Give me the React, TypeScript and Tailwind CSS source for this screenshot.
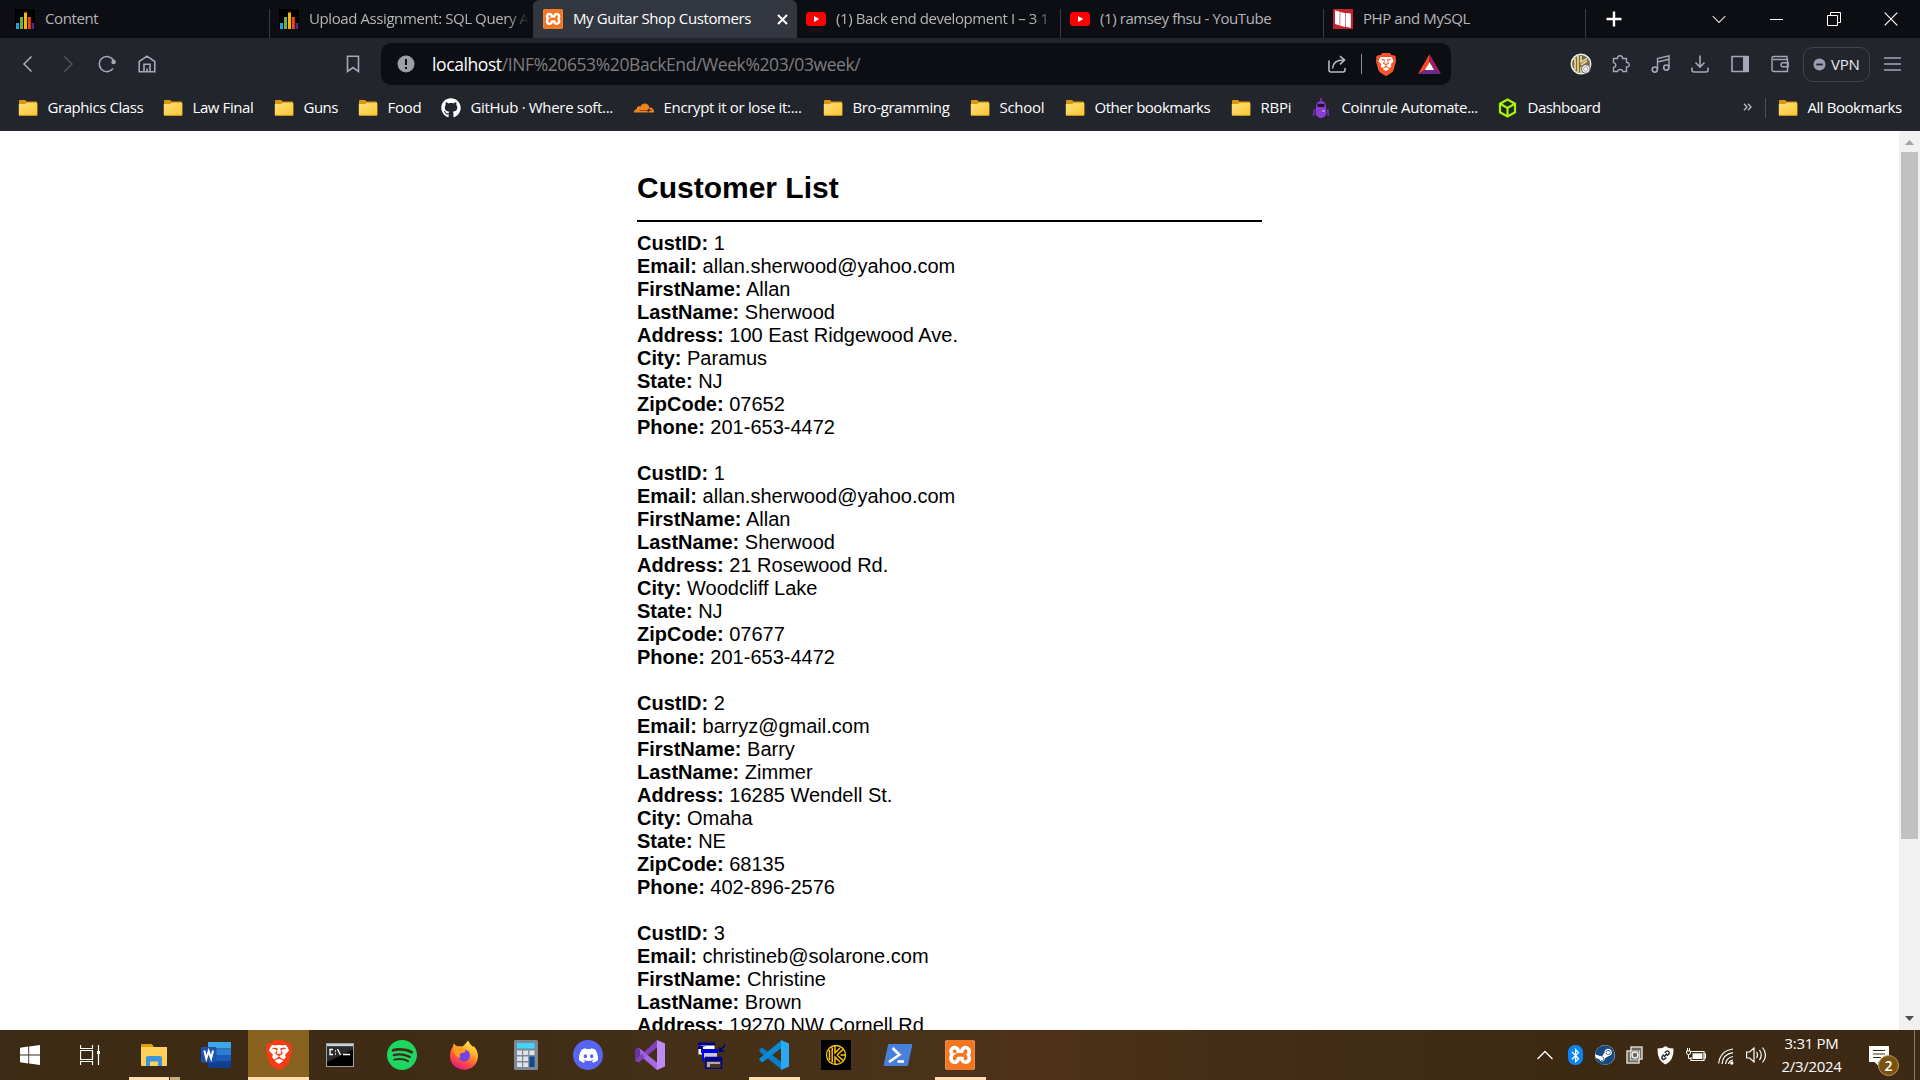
import React from "react";
import { SiBrave, SiXampp, SiCloudflare, SiSpotify, SiDiscord } from "react-icons/si";
import { FaGithub, FaSteam, FaBluetoothB } from "react-icons/fa";

/* ---------- shared icons ---------- */

const Folder = () => (
  <svg width="20" height="18" viewBox="0 0 20 18" className="shrink-0">
    <defs>
      <linearGradient id="fold" x1="0" y1="0" x2="1" y2="1">
        <stop offset="0" stopColor="#ffe07d" />
        <stop offset="1" stopColor="#fbc52f" />
      </linearGradient>
    </defs>
    <path d="M1 2.2Q1 1 2 1h5l1.6 1.6H18q1 0 1 1V8H1z" fill="#d9970c" />
    <path d="M.8 5h6.4l1.6-1.3h9.6q1 0 1 1v11q0 1-1 1H1.8q-1 0-1-1z" fill="url(#fold)" />
    <path d="M1 16.4h18" stroke="#c58f16" strokeWidth=".8" />
  </svg>
);

const Bars = () => (
  <svg width="20" height="20" viewBox="0 0 20 20" className="shrink-0">
    <rect width="20" height="20" fill="#000" />
    <rect x="1" y="14" width="3" height="6" fill="#1ba1f0" />
    <rect x="5" y="8" width="3" height="12" fill="#6cb52d" />
    <rect x="9" y="3.5" width="3" height="16.5" fill="#f5b50a" />
    <rect x="12.8" y="8" width="3" height="12" fill="#f0491d" />
    <rect x="16.6" y="14" width="2.6" height="6" fill="#5b2291" />
  </svg>
);

const YouTube = () => (
  <svg width="20" height="20" viewBox="0 0 20 20" className="shrink-0">
    <rect y="3" width="20" height="14" rx="3.5" fill="#f00" />
    <path d="M8 7l5.2 3L8 13z" fill="#fff" />
  </svg>
);

const Murach = () => (
  <svg width="20" height="20" viewBox="0 0 20 20" className="shrink-0">
    <rect width="20" height="20" fill="#c4222c" />
    <path d="M2 1.5l4.6 1v14L2 15zM7.2 3l4.800 1v14l-4.800-1.300zM12.600 4l5.200.6V19L12.600 17.600z" fill="#fff" />
  </svg>
);

const Xampp = ({ size }: { size: number }) => (
  <span className="flex shrink-0 rounded-[3px] bg-white">
    <SiXampp size={size} color="#f37623" />
  </span>
);

const BraveLion = ({ w, h, color }: { w: number; h: number; color: string }) => (
  <svg width={w} height={h} viewBox="2 0 20 24" preserveAspectRatio="none" className="shrink-0">
    <path d="M6 4h12l2 5-3 8-5 4-5-4-3-8z" fill="#fff" />
    <SiBrave size={24} color={color} />
  </svg>
);

/* ---------- tab strip ---------- */

const tabs = [
  { title: "Content", icon: <Bars />, cls: "w-[270px] pl-[15px]", sep: true },
  { title: "Upload Assignment: SQL Query A", icon: <Bars />, cls: "w-[263px] pl-[9px]", fade: true },
  { title: "My Guitar Shop Customers", icon: <Xampp size={20} />, cls: "w-[264px] pl-[10px]", active: true },
  { title: "(1) Back end development I – 3 1", icon: <YouTube />, cls: "w-[264px] pl-[9px]", sep: true, fade: true },
  { title: "(1) ramsey fhsu - YouTube", icon: <YouTube />, cls: "w-[263px] pl-[9px]", sep: true },
  { title: "PHP and MySQL", icon: <Murach />, cls: "w-[262px] pl-[9px]", sep: true },
];

const TabStrip = () => (
  <div className="flex h-[38px] shrink-0 bg-[#0d0e13]">
    {tabs.map((t) => (
      <div
        key={t.title}
        className={`flex h-[38px] shrink-0 items-center overflow-hidden ${t.cls} ${
          t.active ? "rounded-t-[6px] bg-[#32363f] text-white" : "text-[#b4b5b8]"
        }`}
      >
        {t.icon}
        <span
          className={`ml-[10px] flex-1 whitespace-nowrap pb-[2px] text-[15px] leading-5 tracking-[-0.41px] ${
            t.fade ? "mr-1 [mask-image:linear-gradient(to_right,#000_90%,transparent)]" : ""
          }`}
        >
          {t.title}
        </span>
        {t.active && (
          <svg width="11" height="11" viewBox="0 0 11 11" className="mr-[9px]">
            <path d="M1 1l9 9M10 1l-9 9" stroke="#fff" strokeWidth="2" />
          </svg>
        )}
        {t.sep && <span className="mt-[9px] h-[29px] w-px self-start bg-[#3a3b40]" />}
      </div>
    ))}
    <div className="flex flex-1 items-center">
      <svg width="16" height="16" viewBox="0 0 16 16" className="ml-[20px]">
        <path d="M8 .5v15M.5 8h15" stroke="#fff" strokeWidth="2.4" />
      </svg>
      <svg width="14" height="9" viewBox="0 0 14 9" className="ml-[90px]">
        <path d="M.7 1.2L7 7.5l6.3-6.3" stroke="#ddd" strokeWidth="1.1" fill="none" />
      </svg>
      <span className="ml-[44px] h-px w-[13px] bg-white" />
      <svg width="14" height="14" viewBox="0 0 14 14" className="ml-[44px]">
        <path d="M.5 3.5h10v10H.5zM3.5 3.5v-3h10v10h-3" stroke="#fff" fill="none" />
      </svg>
      <svg width="14" height="14" viewBox="0 0 14 14" className="ml-[43px]">
        <path d="M.7.7l12.6 12.6M13.3.7L.7 13.3" stroke="#fff" strokeWidth="1.2" />
      </svg>
    </div>
  </div>
);

/* ---------- toolbar ---------- */

const Cell = ({ cls, children }: { cls: string; children: React.ReactNode }) => (
  <div className={`flex shrink-0 items-center justify-center ${cls}`}>{children}</div>
);

const stroke = { stroke: "#a3a8b6", strokeWidth: 1.6, fill: "none" } as const;

const Toolbar = () => (
  <div className="flex h-[52px] shrink-0 items-center bg-[#22252c]">
    <Cell cls="ml-2 w-10">
      <svg width="18" height="18" viewBox="0 0 18 18">
        <path d="M12.5 1.500L5 9l7.500 7.500" {...stroke} />
      </svg>
    </Cell>
    <Cell cls="w-[39px]">
      <svg width="18" height="18" viewBox="0 0 18 18">
        <path d="M5.500 1.500L13 9l-7.500 7.500" stroke="#50545e" strokeWidth="1.6" fill="none" />
      </svg>
    </Cell>
    <Cell cls="w-10">
      <svg width="18" height="18" viewBox="0 0 18 18">
        <path d="M15.600 5.500A7.600 7.600 0 1 0 15 13.600" {...stroke} />
        <circle cx="15.600" cy="7" r="2.300" fill="#a3a8b6" />
      </svg>
    </Cell>
    <Cell cls="w-10">
      <svg width="18" height="18" viewBox="0 0 18 18">
        <path d="M1.200 6.500L9 1.200l7.800 5.300v10.200H1.200zM6 16.500V9.200h6v7.300M9 16.500v-3" {...stroke} />
      </svg>
    </Cell>
    <Cell cls="ml-[166px] w-10">
      <svg width="14" height="18" viewBox="0 0 14 18">
        <path d="M1.500 1.200h11v15.300L7 12.600l-5.500 3.900z" {...stroke} />
      </svg>
    </Cell>
    <div className="ml-[8px] flex h-[42px] w-[1070px] shrink-0 items-center rounded-[10px] bg-[#0d0e13] pl-[16px]">
      <svg width="18" height="18" viewBox="0 0 18 18">
        <circle cx="9" cy="9" r="8.500" fill="#9aa0a6" />
        <path d="M9 4v6M9 12v2" stroke="#0d0e13" strokeWidth="2" />
      </svg>
      <span className="ml-[17px] flex-1 whitespace-nowrap text-[17.5px] leading-6 tracking-[-0.4px] text-[#7c7d80]">
        <span className="text-white">localhost</span>/INF%20653%20BackEnd/Week%203/03week/
      </span>
      <svg width="18" height="18" viewBox="0 0 18 18">
        <path d="M1 5.500v9.500q0 2 2 2h12q2 0 2-2v-2M4.500 13.500q.5-8.500 11-8.500M12 1.200l4.500 3.800L12 9.300" {...stroke} stroke="#b6bac4" />
      </svg>
      <span className="ml-[15px] h-5 w-px bg-[#8b8d93]" />
      <span className="ml-[14px]">
        <BraveLion w={20} h={23} color="#fb542b" />
      </span>
      <svg width="23" height="20" viewBox="0 0 23 20" className="ml-[22px] mr-[10px]">
        <path d="M11.500 0L0 20l7-4 4.500-8z" fill="#ff4724" />
        <path d="M11.500 0L23 20l-7-4-4.500-8z" fill="#9e1f63" />
        <path d="M0 20h23l-7-4.200H7z" fill="#662d91" />
        <path d="M11.500 8l4.600 8H6.900z" fill="#fff" />
      </svg>
    </div>
    <Cell cls="ml-[110px] w-10">
      <svg width="22" height="22" viewBox="0 0 22 22">
        <circle cx="11" cy="11" r="9.700" fill="#756b4c" stroke="#eee" strokeWidth="1.500" />
        <path d="M5 5v12M8 3v16M11 3v6l6-3.500M11 12l6-4M11 20v-5l3-2" stroke="#e8d28b" strokeWidth="1.800" fill="none" />
        <circle cx="15.800" cy="16" r="4.200" fill="#fff" stroke="#666" />
        <circle cx="15.800" cy="16" r="2.200" fill="none" stroke="#999" />
      </svg>
    </Cell>
    <Cell cls="w-[39px]">
      <svg width="18" height="18" viewBox="0 0 18 18">
        <path d="M1.500 3.500h4q-.3-2.700 2.500-2.700t2.500 2.700h4v4q2.700-.2 2.700 2.200t-2.700 2.200v4.600h-3.700q-.3-2-2.600-2t-2.600 2H1.500v-4q2.300-.3 2.300-2.400T1.500 7.600z" {...stroke} strokeWidth={1.400} />
      </svg>
    </Cell>
    <Cell cls="w-10">
      <svg width="19" height="18" viewBox="0 0 19 18">
        <path d="M6.500 14.500V3.500L18 .8v11.500M6.500 7L18 4.300" {...stroke} strokeWidth={1.400} />
        <circle cx="3.800" cy="14.600" r="2.600" {...stroke} />
        <circle cx="15.300" cy="12.600" r="2.600" {...stroke} />
      </svg>
    </Cell>
    <Cell cls="w-10">
      <svg width="18" height="18" viewBox="0 0 18 18">
        <path d="M9 .5v11M4.500 7.500L9 12l4.500-4.500M1 12.500v2.500q0 2 2 2h12q2 0 2-2v-2.500" {...stroke} />
      </svg>
    </Cell>
    <Cell cls="w-10">
      <svg width="18" height="18" viewBox="0 0 18 18">
        <path d="M1 1.500h16v15H1z" {...stroke} />
        <path d="M12 1h6v16h-6z" fill="#a3a8b6" />
      </svg>
    </Cell>
    <Cell cls="w-10">
      <svg width="18" height="18" viewBox="0 0 18 18">
        <path d="M16 5V1.500H3Q1 1.500 1 3v11.500q0 2 2 2h13.500V4.500H2M17.200 7.800H12q-2 0-2 2t2 2h5.200z" {...stroke} strokeWidth={1.400} />
      </svg>
    </Cell>
    <div className="ml-[3px] flex h-[35px] w-[67px] shrink-0 items-center rounded-[10px] border border-[#3f444f] pl-[9px]">
      <svg width="13" height="13" viewBox="0 0 13 13">
        <circle cx="6.500" cy="6.500" r="6" fill="#9a9fb0" />
        <path d="M3.200 6.500h6.600" stroke="#22252c" strokeWidth="1.800" />
      </svg>
      <span className="ml-[5px] text-[15px] leading-5 tracking-[-0.2px] text-[#e8e9ec]">VPN</span>
    </div>
    <svg width="17" height="14" viewBox="0 0 17 14" className="ml-[14px]">
      <path d="M0 1h17M0 7h17M0 13h17" {...stroke} strokeWidth={1.500} />
    </svg>
  </div>
);

/* ---------- bookmarks ---------- */

const Bot = () => (
  <svg width="18" height="20" viewBox="0 0 18 20" className="mr-[2px] shrink-0">
    <path d="M9 0v4" stroke="#7b35c2" strokeWidth="1.500" />
    <path d="M4 9q0-6 5-6t5 6l.5 7q-2 4-5.500 4t-5.500-4z" fill="#8b3dd0" />
    <path d="M5.500 5.800h7v3.200h-7z" fill="#1d1230" />
    <path d="M2.500 11L1.500 18M15.500 11l1 7" stroke="#6a2bab" strokeWidth="2" />
    <path d="M10.500 13h2" stroke="#fff" />
  </svg>
);

const Cube = () => (
  <svg width="19" height="20" viewBox="0 0 19 20" className="mr-px shrink-0">
    <path d="M9.500 1.500l7.500 4.200v8.600l-7.500 4.200L2 14.300V5.700zM2.500 6l7 4 7-4M9.500 10v8" stroke="#a6f20a" strokeWidth="2.200" fill="none" />
  </svg>
);

const bookmarks = [
  { t: "Graphics Class", w: "w-[145px] tracking-[-0.43px]" },
  { t: "Law Final", w: "w-[111px] tracking-[-0.4px]" },
  { t: "Guns", w: "w-[84px] tracking-[-0.5px]" },
  { t: "Food", w: "w-[83px] tracking-[-0.3px]" },
  { t: "GitHub · Where soft...", w: "w-[193px] tracking-[-0.32px]", i: <FaGithub size={20} color="#fff" className="shrink-0" /> },
  { t: "Encrypt it or lose it:...", w: "w-[189px] tracking-[-0.32px]", i: <SiCloudflare size={20} color="#f6821f" className="shrink-0" /> },
  { t: "Bro-gramming", w: "w-[147px] tracking-[-0.35px]" },
  { t: "School", w: "w-[95px] tracking-[-0.3px]" },
  { t: "Other bookmarks", w: "w-[166px] tracking-[-0.5px]" },
  { t: "RBPi", w: "w-[81px] tracking-[-0.2px]" },
  { t: "Coinrule Automate...", w: "w-[186px] tracking-[-0.37px]", i: <Bot /> },
  { t: "Dashboard", w: "w-[241px] tracking-[-0.5px]", i: <Cube /> },
];

const Bookmarks = () => (
  <div className="flex h-[41px] shrink-0 items-center bg-[#22252c] pb-[5px] pl-[18px] text-[15px] leading-5 text-white">
    {bookmarks.map((b) => (
      <div key={b.t} className={`flex shrink-0 items-center gap-[9.500px] whitespace-nowrap ${b.w}`}>
        {b.i ?? <Folder />}
        <span className="pb-[2px]">{b.t}</span>
      </div>
    ))}
    <svg width="9" height="8" viewBox="0 0 9 8" className="ml-[4px] mb-[2px]">
      <path d="M1 .7L4 4 1 7.300M5 .7L8 4 5 7.300" stroke="#b7bbc6" strokeWidth="1.300" fill="none" />
    </svg>
    <span className="ml-[13px] h-5 w-px bg-[#4b4f59]" />
    <div className="ml-[12px] flex items-center gap-[9.500px] whitespace-nowrap tracking-[-0.45px]">
      <Folder />
      <span className="pb-[2px]">All Bookmarks</span>
    </div>
  </div>
);

/* ---------- page ---------- */

const customers = [
  ["1", "allan.sherwood@yahoo.com", "Allan", "Sherwood", "100 East Ridgewood Ave.", "Paramus", "NJ", "07652", "201-653-4472"],
  ["1", "allan.sherwood@yahoo.com", "Allan", "Sherwood", "21 Rosewood Rd.", "Woodcliff Lake", "NJ", "07677", "201-653-4472"],
  ["2", "barryz@gmail.com", "Barry", "Zimmer", "16285 Wendell St.", "Omaha", "NE", "68135", "402-896-2576"],
  ["3", "christineb@solarone.com", "Christine", "Brown", "19270 NW Cornell Rd"],
];
const fields = ["CustID", "Email", "FirstName", "LastName", "Address", "City", "State", "ZipCode", "Phone"];

const Page = () => (
  <div className="flex min-h-0 flex-1 overflow-hidden bg-white">
    <div className="flex-1 overflow-hidden pl-[637px] font-['Liberation_Sans',Arial,sans-serif] text-black">
      <div className="w-[625px]">
        <h2 className="pt-[40px] text-[30px] font-bold leading-[34px]">Customer List</h2>
        <div className="mt-[15px] h-[2px] bg-black" />
        <div className="mt-[10px] flex flex-col gap-[23px] text-[20px] leading-[23px]">
          {customers.map((c, i) => (
            <div key={i}>
              {c.map((v, j) => (
                <p key={j} className="whitespace-nowrap">
                  <b>{fields[j]}:</b> {v}
                </p>
              ))}
            </div>
          ))}
        </div>
      </div>
    </div>
    <div className="flex w-[21px] shrink-0 flex-col items-center bg-[#f1f1f1]">
      <svg width="9" height="5" viewBox="0 0 9 5" className="mt-[9px]">
        <path d="M4.500 0L9 5H0z" fill="#a3a3a3" />
      </svg>
      <div className="mt-[7px] h-[687px] w-[17px] bg-[#c1c1c1]" />
      <svg width="9" height="5" viewBox="0 0 9 5" className="mb-[9px] mt-auto">
        <path d="M0 0h9L4.500 5z" fill="#505050" />
      </svg>
    </div>
  </div>
);

/* ---------- taskbar ---------- */

const Explorer = () => (
  <svg width="28" height="24" viewBox="0 0 28 24">
    <path d="M1 1.500Q1 1 2 1h10l1.500 2.500V8H1z" fill="#e0a00c" />
    <path d="M1 4h26v18q0 1-1 1H2q-1 0-1-1z" fill="#fdd05a" />
    <path d="M6 15q0-2 2-2h12q2 0 2 2v8h-4v-4.500h-8V23H6z" fill="#3a95dc" />
  </svg>
);

const Word = () => (
  <svg width="30" height="26" viewBox="0 0 30 26">
    <path d="M7 0h23v6.500H7z" fill="#41a5ee" />
    <path d="M7 6.500h23V13H7z" fill="#2b7cd3" />
    <path d="M7 13h23v6.500H7z" fill="#185abd" />
    <path d="M7 19.500h23V26H7z" fill="#103f91" />
    <rect y="5" width="15.500" height="15.500" rx="1" fill="#1a53ad" />
    <path d="M3.300 8.500l2 8 2.400-7.500 2.400 7.500 2-8" stroke="#fff" strokeWidth="2" fill="none" />
  </svg>
);

const Cmd = () => (
  <svg width="28" height="24" viewBox="0 0 28 24">
    <rect x=".5" y=".5" width="27" height="23" fill="#000" stroke="#9aa0a6" />
    <path d="M1 1h26v2.500H1z" fill="#c9d1da" />
    <path d="M1 3.500h26v3L1 19z" fill="#2c2c2c" />
    <path d="M7 6.500H4v5h3M9 8h1M9 11h1M11.500 6l3 6M17 11.500h7" stroke="#fff" strokeWidth="1.300" fill="none" />
  </svg>
);

const Firefox = () => (
  <svg width="30" height="30" viewBox="0 0 30 30">
    <defs>
      <linearGradient id="ff" x1=".8" y1="0" x2=".3" y2="1">
        <stop offset="0" stopColor="#fff44f" />
        <stop offset=".35" stopColor="#ffb02a" />
        <stop offset=".65" stopColor="#ff5a36" />
        <stop offset="1" stopColor="#e31587" />
      </linearGradient>
    </defs>
    <path d="M19 .5q2 4 4.500 6 1 .8 1.300-.5Q29 11 29 16.500A14 13.500 0 0 1 1 16q0-5.500 3-9.500l.5-3L7.500 6l6 .5Q16 5 19 .5z" fill="url(#ff)" />
    <circle cx="15" cy="15.500" r="6" fill="#7542e5" />
    <path d="M4 8q5-3 9 0 3 1.500 4 3-2 2.500-5 2-2 2-1 5-6-1-7-10z" fill="#ff9b24" />
  </svg>
);

const Calculator = () => (
  <svg width="24" height="30" viewBox="0 0 24 30">
    <rect width="24" height="30" rx="1.500" fill="#7d8894" />
    <path d="M3 3h17.500v5.500H3z" fill="#40d6f7" />
    <path d="M3 10.500h5V15H3zM9.200 10.500h5V15h-5zM15.500 10.500h5V15h-5zM3 16.500h5V21H3zM9.200 16.500h5V21h-5zM3 22.500h5V27H3zM9.200 22.500h5V27h-5z" fill="#dde3e8" />
    <path d="M15.500 16.500h5V27h-5z" fill="#104a8c" />
  </svg>
);

const VisualStudio = () => (
  <svg width="30" height="30" viewBox="0 0 30 30">
    <path d="M0 9.500l3.500-2L22 23v7L0 12z" fill="#9a5bd6" />
    <path d="M0 9.500L3.500 7.500 5 9v12L3.500 22.500 0 20.500z" fill="#68359f" />
    <path d="M3.500 22.500L0 20.500 22 0v7.500z" fill="#8341c0" />
    <path d="M4.500 8.400L22 22.500V30L10 18 3.500 8z" fill="#ad70e8" opacity=".7" />
    <path d="M22 0l8 3.500v23L22 30z" fill="#c08af5" />
  </svg>
);

const Windows9x = () => (
  <svg width="28" height="28" viewBox="0 0 28 28">
    <path d="M.5 2.500h16v11H.5z" fill="#fff" />
    <path d="M0 1.500h17v3H0zM0 4v4h3v4h2v-6h3" fill="#00008b" />
    <path d="M4 8h16v4H4z" fill="#0000ee" />
    <path d="M5 12h14v5H5z" fill="#c9c9d9" />
    <path d="M4 12h2v8H4z" fill="#00f" />
    <path d="M7.500 16.500h16v11h-16z" fill="#4a3319" stroke="#00008b" strokeWidth="1.500" />
    <path d="M8 17h15v3H8z" fill="#00009b" />
    <path d="M9 21h13v2H12v3H9z" fill="#aab" />
    <path d="M26 1q3 5-2 7l3 3h-6V6l2 1q4-2 3-6z" fill="#00007b" />
  </svg>
);

const VsCode = () => (
  <svg width="30" height="30" viewBox="0 0 30 30">
    <path d="M0 9.800L3.300 7.500 23 22.500V30L1 12z" fill="#0a7bc4" />
    <path d="M0 19.800L3.300 22.500 23 7.500V0L1 18z" fill="#0a8bd8" />
    <path d="M22 0l8 3.500v23L22 30z" fill="#2aa9f2" />
  </svg>
);

const Keeper = () => (
  <svg width="30" height="30" viewBox="0 0 30 30">
    <rect width="30" height="30" fill="#000" />
    <circle cx="15" cy="15" r="9.500" fill="none" stroke="#fcc40f" strokeWidth="1.300" />
    <path d="M8.500 10v10M11.200 7.500v15M14 6v7l5-5M14 24v-7l5 5M16 15l6-5.500M16 15l6 5.500M19.500 15H24" stroke="#fcc40f" strokeWidth="1.500" fill="none" />
  </svg>
);

const PowerShell = () => (
  <svg width="30" height="24" viewBox="0 0 30 24">
    <path d="M6 1h22.500q1 0 .8 1L25 22q-.3 1-1.300 1H1.500q-1 0-.8-1L5 2q.2-1 1-1z" fill="#4781db" />
    <path d="M9.500 5l7 6.700L6 19M14.500 18.500h6.500" stroke="#fff" strokeWidth="2.600" fill="none" />
  </svg>
);

const apps = [
  { id: "explorer", icon: <Explorer />, split: true },
  { id: "word", icon: <Word /> },
  { id: "brave", icon: <BraveLion w={26} h={30} color="#fa3a12" />, active: true },
  { id: "cmd", icon: <Cmd /> },
  { id: "spotify", icon: <SiSpotify size={30} color="#1ed760" /> },
  { id: "firefox", icon: <Firefox /> },
  { id: "calculator", icon: <Calculator /> },
  {
    id: "discord",
    icon: (
      <span className="flex size-[30px] items-center justify-center rounded-full bg-[#5865f2]">
        <SiDiscord size={19} color="#fff" />
      </span>
    ),
  },
  { id: "vs", icon: <VisualStudio /> },
  { id: "win9x", icon: <Windows9x /> },
  { id: "vscode", icon: <VsCode />, open: true },
  { id: "keeper", icon: <Keeper /> },
  { id: "ps", icon: <PowerShell /> },
  { id: "xampp", icon: <Xampp size={30} />, open: true },
];

const w = { stroke: "#fff", fill: "none" } as const;

const Taskbar = () => (
  <div className="flex h-[50px] shrink-0 bg-[linear-gradient(90deg,#3d2a14_0%,#402c15_25%,#4a331a_50%,#4f311a_53%,#432d16_65%,#3c2913_85%,#3e2a14_100%)] text-white">
    <Cell cls="w-[60px]">
      <svg width="20" height="20" viewBox="0 0 20 20" fill="#fff">
        <path d="M0 2.800l8.300-1.200v7.900H0zM9.200 1.500L20 0v9.500H9.200zM0 10.500h8.300v7.900L0 17.200zM9.200 10.500H20V20L9.200 18.500z" />
      </svg>
    </Cell>
    <Cell cls="mr-[3px] w-[60px]">
      <svg width="20" height="20" viewBox="0 0 20 20">
        <path d="M.5 0v3.500h12V0M.5 20v-3.500h12V20M.5 5.500h12v9H.5zM18.500 0v20" {...w} strokeWidth="1.200" />
        <path d="M17 6h3v3h-3z" fill="#fff" />
      </svg>
    </Cell>
    {apps.map((a) => (
      <div
        key={a.id}
        className={`flex shrink-0 flex-col items-center ${a.active ? "ml-px w-[61px] bg-[#87611d]" : "w-[62px]"}`}
      >
        <div className="flex h-[47px] items-center pt-[3px]">{a.icon}</div>
        {a.active && <div className="h-[3px] w-full bg-[#ffdfb0]" />}
        {a.open && <div className="h-[3px] w-[51px] bg-[#ffdfb0]" />}
        {a.split && (
          <div className="flex h-[3px] w-[51px] gap-px">
            <span className="w-10 bg-[#ffdfb0]" />
            <span className="w-[10px] bg-[#c9ab82]" />
          </div>
        )}
      </div>
    ))}
    <div className="ml-auto flex items-center">
      <Cell cls="w-[30px]">
        <svg width="16" height="10" viewBox="0 0 16 10">
          <path d="M.5 9L8 1.500 15.500 9" {...w} strokeWidth="1.300" />
        </svg>
      </Cell>
      <Cell cls="w-[30px]">
        <span className="flex h-5 w-[15px] items-center justify-center rounded-[7px] bg-[#0a84f5]">
          <FaBluetoothB size={15} />
        </span>
      </Cell>
      <Cell cls="w-[30px]">
        <span className="flex rounded-full bg-white">
          <FaSteam size={20} color="#174a80" />
        </span>
      </Cell>
      <Cell cls="w-[30px]">
        <svg width="18" height="18" viewBox="0 0 18 18">
          <path d="M5 1h11v12h-3v4H1V5h4z" fill="#6b665e" stroke="#d8d5cf" strokeWidth="1.500" />
          <path d="M4.500 5h9v9h-9z" fill="none" stroke="#d8d5cf" strokeWidth="1.200" />
          <circle cx="9" cy="9" r="3" fill="none" stroke="#eee" strokeWidth="1.500" />
        </svg>
      </Cell>
      <Cell cls="w-[30px]">
        <svg width="17" height="19" viewBox="0 0 17 19">
          <path d="M8.500 0Q11 2.500 16.500 2.500q.5 12-8 16-8.500-4-8-16Q6 2.500 8.500 0z" fill="#fff" />
          <path d="M7.800 6.800l1.500-1.500q1.500-1 2.500.3t0 2.500L10 9.800M9.300 11.500l-1.500 1.500q-1.500 1-2.500-.3t0-2.500L7 8.500M7 11l3-3.500" stroke="#222" strokeWidth="1.400" fill="none" />
        </svg>
      </Cell>
      <Cell cls="w-[31px]">
        <svg width="20" height="14" viewBox="0 0 20 14">
          <path d="M4.500 3.500h13.500v9H5V9M18.500 6h1v4h-1" {...w} strokeWidth="1.200" />
          <path d="M6.500 5.300h10v5.700h-10z" fill="#fff" />
          <path d="M.5 3h4v2q0 1.500-2 1.500T.5 5zM1.500 0v3M3.500 0v3M2.500 6.500v4H5" {...w} />
        </svg>
      </Cell>
      <Cell cls="w-[30px]">
        <svg width="16" height="17" viewBox="0 0 16 17" className="mt-[3px]">
          <path d="M.7 15.500Q2 3 15 1M4 16Q5 6 15 4.700M7.500 16Q8.500 9.500 15 8.500M10.500 16Q11 12.800 15 12" {...w} strokeWidth="1.200" />
          <circle cx="13.800" cy="15" r="1.700" fill="#fff" />
        </svg>
      </Cell>
      <Cell cls="w-[30px]">
        <svg width="21" height="18" viewBox="0 0 21 18">
          <path d="M.6 6h3L8 2v14l-4.400-4h-3zM10.500 6q2 3 0 6M13.500 4q3.500 5 0 10M16.500 1.500q6 7.500 0 15" {...w} strokeWidth="1.200" />
        </svg>
      </Cell>
      <div className="mr-[2px] flex w-[81px] flex-col items-center text-center text-[15px] leading-[23px] tracking-[-0.3px]">
        <span>3:31 PM</span>
        <span>2/3/2024</span>
      </div>
      <div className="relative ml-[15px] h-[18px] w-5">
        <svg width="20" height="20" viewBox="0 0 20 20">
          <path d="M0 0h20v16H9.500v4l-4-4H0z" fill="#fff" />
          <path d="M4 4.500h12M4 8h12M4 11.500h8" stroke="#3e2a14" strokeWidth="1.200" />
        </svg>
        <span className="absolute left-[9px] top-[9px] flex size-[21px] items-center justify-center rounded-full border border-[#b59a62] bg-[#7a540f] text-[14px] font-semibold leading-none">
          2
        </span>
      </div>
      <span className="ml-[25px] mr-[5px] h-[50px] w-px bg-[#8a7d6b]" />
    </div>
  </div>
);

export default function App() {
  return (
    <div className="flex h-[1080px] w-[1920px] flex-col overflow-hidden bg-white font-['Open_Sans','Noto_Sans',sans-serif]">
      <TabStrip />
      <Toolbar />
      <Bookmarks />
      <Page />
      <Taskbar />
    </div>
  );
}
